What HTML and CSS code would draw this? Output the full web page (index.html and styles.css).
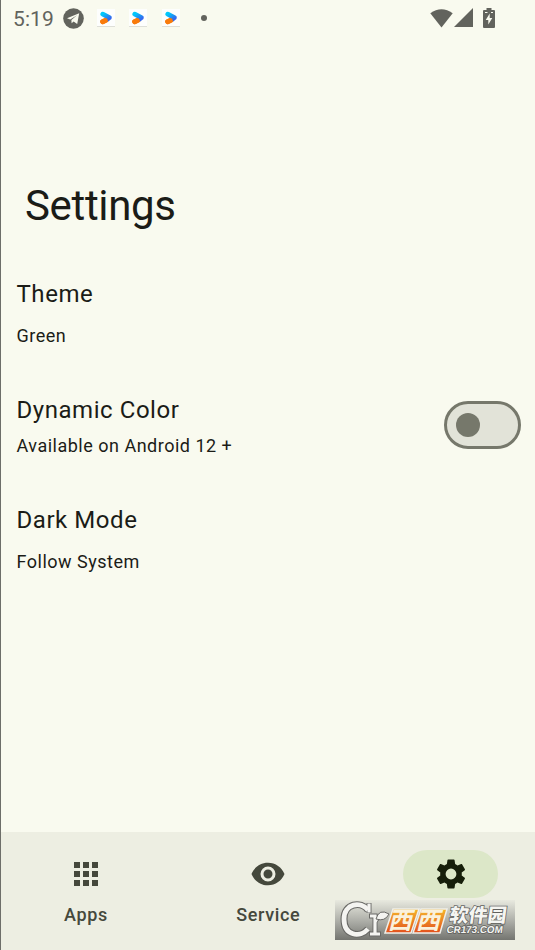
FILE: index.html
```html
<!DOCTYPE html>
<html lang="en">
<head>
<meta charset="utf-8">
<title>Settings</title>
<link rel="stylesheet" href="styles.css">
</head>
<body>
<svg class="defs" width="0" height="0" aria-hidden="true">
  <defs>
    <linearGradient id="blue" x1="0" y1="0" x2="1" y2="1"><stop stop-color="#00c8fa"/><stop offset="1" stop-color="#3468ee"/></linearGradient>
    <symbol id="play" viewBox="0 0 18 18">
      <path d="M0 0h18v18H0z" fill="#fdfefd"/><path d="M0 17.5h18" stroke="#dedfd8"/>
      <path d="M5.6 12.7L9 11" stroke="#f97b0b" stroke-width="5" stroke-linecap="round"/>
      <path d="M5.8 5.2L12.4 8.6L10.500 10" fill="none" stroke="url(#blue)" stroke-width="4.800" stroke-linecap="round" stroke-linejoin="round"/>
      <path d="M5.700 12.7L8.4 11.6" stroke="#f97b0b" stroke-width="4.800" stroke-linecap="round"/>
    </symbol>
  </defs>
</svg>
<div class="screen">
  <header class="status">
    <span class="time">5:19</span>
    <svg class="telegram" viewBox="0 0 21 21"><circle cx="10.5" cy="10.5" r="10.3" fill="#62635d"/><path d="M4 10.3L16.2 5.3L14.2 16L10.6 13.4L8.6 15.3L8.4 12.1L14 7.2L7.2 11.5Z" fill="#f9faef"/></svg>
    <svg class="app"><use href="#play"/></svg>
    <svg class="app"><use href="#play"/></svg>
    <svg class="app"><use href="#play"/></svg>
    <i class="dot"></i>
    <div class="system">
      <svg width="23" height="19" viewBox="0 0 23 19"><path d="M.3 4.2Q11.5-3.8 22.7 4.2L11.5 18.5Z"/></svg>
      <svg class="signal" width="19" height="19" viewBox="0 0 19 19"><path d="M0 19L19 0V19Z"/></svg>
      <svg class="battery" width="12" height="20" viewBox="0 0 12 20"><path d="M3.5 0h5v2H11q1 0 1 1v16q0 1-1 1H1q-1 0-1-1V3q0-1 1-1h2.500z"/><path d="M2 4.500h2.500M8 4.500h2" stroke="#f9faef"/><path d="M6.700 5.500L2.700 12h2.600v4.500L9.300 10H6.700z" fill="#f9faef"/></svg>
    </div>
  </header>
  <main>
    <h1>Settings</h1>
    <section class="item spaced"><div><h2>Theme</h2><p>Green</p></div></section>
    <section class="item dynamic"><div><h2>Dynamic Color</h2><p>Available on Android 12 +</p></div><span class="switch" role="switch" aria-checked="false"><i></i></span></section>
    <section class="item spaced"><div><h2>Dark Mode</h2><p>Follow System</p></div></section>
  </main>
  <nav>
    <a class="tab"><span class="pill"><svg viewBox="0 0 24 24"><path d="M4 8h4V4H4zm6 12h4v-4h-4zm-6 0h4v-4H4zm0-6h4v-4H4zm6 0h4v-4h-4zm6-10v4h4V4zm-6 4h4V4h-4zm6 6h4v-4h-4zm0 6h4v-4h-4z"/></svg></span><span>Apps</span></a>
    <a class="tab"><span class="pill"><svg viewBox="0 0 24 24"><path d="M12 4.500C7 4.500 2.730 7.610 1 12c1.730 4.390 6 7.500 11 7.500s9.270-3.110 11-7.500c-1.730-4.390-6-7.500-11-7.500zM12 17a5 5 0 1 1 0-10 5 5 0 0 1 0 10zm0-8a3 3 0 1 0 0 6 3 3 0 0 0 0-6z"/></svg></span><span>Service</span></a>
    <a class="tab selected"><span class="pill"><svg viewBox="0 0 24 24"><path d="M19.140 12.940c.04-.3.06-.61.06-.94 0-.32-.02-.64-.07-.94l2.030-1.580c.18-.14.23-.41.12-.61l-1.920-3.320c-.12-.22-.37-.29-.59-.22l-2.390.96c-.5-.38-1.030-.7-1.620-.94l-.36-2.540c-.04-.24-.24-.41-.48-.41h-3.840c-.24 0-.43.17-.47.41l-.36 2.540c-.59.24-1.130.57-1.620.94l-2.390-.96c-.22-.08-.47 0-.59.22L2.740 8.870c-.12.21-.08.47.12.61l2.030 1.580c-.05.3-.09.63-.09.94s.02.64.07.94l-2.030 1.580c-.18.14-.23.41-.12.61l1.920 3.320c.12.22.37.29.59.22l2.390-.96c.5.38 1.030.7 1.620.94l.36 2.540c.05.24.24.41.48.41h3.840c.24 0 .44-.17.47-.41l.36-2.540c.59-.24 1.130-.56 1.620-.94l2.390.96c.22.08.47 0 .59-.22l1.920-3.320c.12-.22.07-.47-.12-.61zM12 15.600a3.600 3.600 0 1 1 0-7.200 3.600 3.600 0 0 1 0 7.200z"/></svg></span><span>Settings</span></a>
  </nav>
  <aside class="watermark">
    <svg width="180" height="40" viewBox="0 0 180 40">
      <defs><linearGradient id="orange" x1="0" y1="0" x2="0" y2="1"><stop stop-color="#f5b62c"/><stop offset="1" stop-color="#e2501d"/></linearGradient></defs>
      <g fill="none" stroke-linecap="butt">
        <path d="M33 10C26 1 9 3 9 19C9 36 25 38 33 29" stroke="#696966" stroke-width="7"/>
        <path d="M34 3v10M34 16h6v17M34 34h12M40 22q3-7 8-6" stroke="#696966" stroke-width="5"/>
        <path d="M33 10C26 1 9 3 9 19C9 36 25 38 33 29" stroke="#f4f4f1" stroke-width="4.800"/>
        <path d="M34 3.500v9M35 16h5v17M35 34h10M40 22q3-7 8-6" stroke="#f4f4f1" stroke-width="3.200"/>
      </g>
      <path d="M41 19Q44 8 54 14Q50 22 41 19Z" fill="#f4f4f1" stroke="#696966"/>
      <g stroke="#f0efe9" stroke-width="1.500"><path d="M58 9H84L76 33H50Z" fill="url(#orange)"/><path d="M86 9H112L105 33H78Z" fill="url(#orange)"/></g>
      <g transform="skewX(-14)" class="cn"><text x="60" y="29.500" textLength="24" lengthAdjust="spacingAndGlyphs">西</text><text x="88" y="29.500" textLength="24" lengthAdjust="spacingAndGlyphs">西</text></g>
      <g transform="skewX(-8)"><text class="name" x="117" y="22.500" textLength="57" lengthAdjust="spacingAndGlyphs">软件园</text><text class="url" x="116" y="33.500" textLength="56" lengthAdjust="spacingAndGlyphs">CR173.COM</text></g>
    </svg>
  </aside>
</div>
</body>
</html>
```

FILE: styles.css
```css
* { box-sizing: border-box; }
body { margin: 0; background: #f9faef; color: #1b1c17; font-family: Roboto, "Noto Sans CJK SC", sans-serif; }
.defs { position: absolute; }
.screen { position: relative; width: 535px; height: 950px; border-left: 1px solid #6d6e69; display: flex; flex-direction: column; overflow: hidden; }
.status { height: 36px; display: flex; align-items: center; padding-left: 12px; color: #62635d; }
.time { width: 50px; font-size: 21px; line-height: 24px; letter-spacing: .1px; padding-top: 1px; }
.telegram { width: 21px; height: 21px; margin-right: 12.5px; }
.app { width: 18px; height: 18px; margin-right: 14.700px; }
.dot { width: 6px; height: 6px; border-radius: 50%; background: #62635d; margin-left: 6px; }
.system { display: flex; margin: 0 40px 0 auto; align-items: center; fill: #62635d; }
.signal { margin-left: 1px; margin-top: -1px; }
.battery { margin-left: 10px; margin-top: -1px; }
main { flex: 1; }
h1, h2, p { margin: 0; font-weight: 400; }
h1 { margin: 142px 0 0 24px; font-size: 42px; line-height: 56px; letter-spacing: -.35px; }
.item { display: flex; align-items: center; justify-content: space-between; padding: 0 14px 0 15.500px; }
h2 { font-size: 24px; line-height: 36px; letter-spacing: .55px; }
p { font-size: 18px; line-height: 24px; letter-spacing: .5px; }
.spaced p { margin-top: 12px; }
.item { margin-top: 44px; }
h1 + .item { margin-top: 42px; }
.dynamic p { margin-top: 6px; }
.switch { width: 77px; height: 48px; border: 3px solid #76786b; border-radius: 24px; background: #e2e3d8; display: flex; align-items: center; padding-left: 9px; }
.switch i { width: 24px; height: 24px; border-radius: 50%; background: #76786b; }
nav { height: 118px; background: #edeee2; display: grid; grid-template-columns: repeat(3, 170px); column-gap: 12.300px; padding-top: 18px; }
.tab { display: flex; flex-direction: column; align-items: center; color: #45483c; font-size: 18px; font-weight: 500; line-height: 24px; letter-spacing: .65px; }
.pill { width: 95px; height: 48px; border-radius: 24px; display: flex; align-items: center; justify-content: center; margin-bottom: 5px; }
.pill svg { width: 36px; height: 36px; fill: currentColor; }
.selected .pill { background: #dce7c8; color: #161e0a; }
.watermark { position: absolute; left: 334px; top: 900px; width: 180px; height: 40px; background: linear-gradient(#e8e9df, #aaaba5 55%, #747570); }
.watermark svg { display: block; }
.cn { font: 700 24px "Noto Sans CJK SC", sans-serif; fill: #faf1dc; }
.name { font: 900 19px "Noto Sans CJK SC", sans-serif; }
.url { font: 700 10px "Liberation Sans", sans-serif; }
.name, .url { fill: #f5f5f2; stroke: #60605d; stroke-width: 1.5px; paint-order: stroke; }
```
